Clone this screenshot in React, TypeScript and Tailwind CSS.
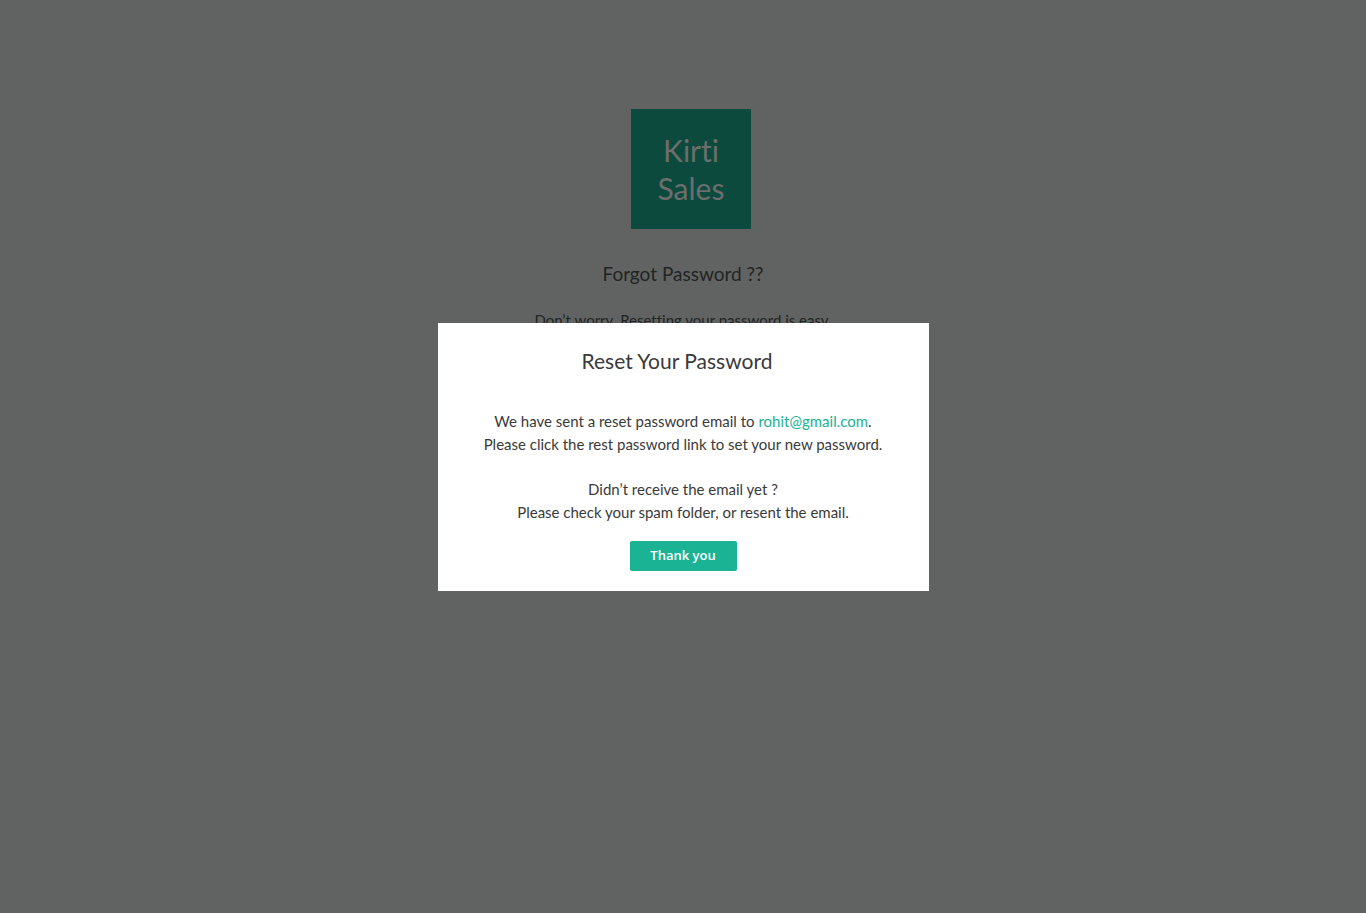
export default function App() {
  return (
    <div className="relative min-h-screen bg-[#616362] font-['Lato',sans-serif] text-[#3a3a3a] [font-variant-ligatures:none]">
      <main className="flex flex-col items-center pt-[109px] text-center text-[#222423]">
        <div className="ml-4 flex size-[120px] items-center justify-center bg-[#0b4a3c] text-[30px] leading-[38px] text-[#6b6e6c]">
          <span>
            Kirti
            <br />
            Sales
          </span>
        </div>
        <h1 className="mt-[31px] text-[19px] leading-7">Forgot Password ??</h1>
        <p className="mt-5 text-[15px] leading-6">Don’t worry. Resetting your password is easy.</p>
      </main>
      <div className="fixed inset-0 flex items-center justify-center">
        <section
          role="dialog"
          aria-modal="true"
          aria-labelledby="reset-title"
          className="flex w-[491px] max-w-full flex-col items-center bg-white px-6 py-5 text-center"
        >
          <h2 id="reset-title" className="pr-3 text-[21px] leading-9">
            Reset Your Password
          </h2>
          <p className="mt-[31px] text-[15px] leading-[23px]">
            We have sent a reset password email to{' '}
            <a href="mailto:rohit@gmail.com" className="text-[#1ab394]">
              rohit@gmail.com
            </a>
            .
            <br />
            Please click the rest password link to set your new password.
          </p>
          <p className="mt-[22px] text-[15px] leading-[23px]">
            Didn’t receive the email yet ?
            <br />
            Please check your spam folder, or resent the email.
          </p>
          <button
            type="button"
            className="mt-[17px] h-[30px] w-[107px] rounded-xs bg-[#1ab394] font-['Open_Sans',sans-serif] text-[13px] font-semibold text-white"
          >
            Thank you
          </button>
        </section>
      </div>
    </div>
  );
}
